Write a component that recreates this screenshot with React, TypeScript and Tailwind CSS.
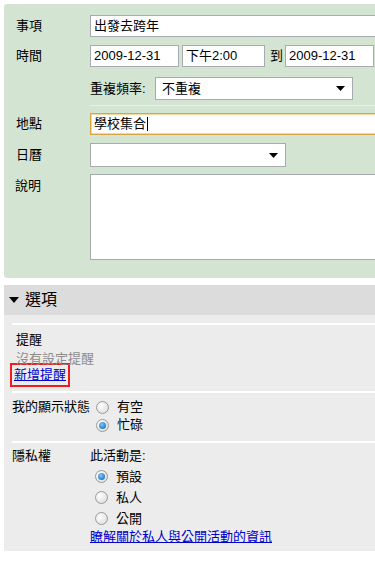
import type { ReactNode } from "react";

const font = { fontFamily: '"Liberation Sans", "Noto Sans CJK TC", sans-serif' };

function Label({ children }: { children: ReactNode }) {
  return <div className="w-[86px] shrink-0 pl-[12px] text-[13px] text-black">{children}</div>;
}

function TextBox({ value, className }: { value: string; className: string }) {
  return (
    <div
      className={`flex h-[22px] shrink-0 items-center border border-[#a7abb0] bg-white pl-[3px] text-[13px] text-black ${className}`}
    >
      {value}
    </div>
  );
}

function Arrow() {
  return (
    <svg width="9" height="5" viewBox="0 0 9 5" className="shrink-0">
      <path d="M0 0h9L4.5 5z" fill="#000" />
    </svg>
  );
}

function Radio({ checked }: { checked?: boolean }) {
  return (
    <span className="flex h-[13px] w-[13px] shrink-0 items-center justify-center rounded-full border border-[#9a9a9a] bg-[radial-gradient(circle_at_35%_35%,#ffffff,#d6d6d6)]">
      {checked ? (
        <span className="h-[7px] w-[7px] rounded-full bg-[radial-gradient(circle_at_40%_35%,#7fc4ff,#0a5fa8)]" />
      ) : null}
    </span>
  );
}

function RadioRow({ label, checked, h }: { label: string; checked?: boolean; h: string }) {
  return (
    <div className={`flex items-center gap-[8px] ${h}`}>
      <Radio checked={checked} />
      <span>{label}</span>
    </div>
  );
}

export default function App() {
  return (
    <div className="h-[572px] w-[375px] overflow-hidden bg-white pl-[4px] pt-[4px]" style={font}>
      {/* event details */}
      <div className="h-[274px] overflow-hidden rounded-l-[3px] bg-[#d3e5d2] pt-[11px]">
        <div className="flex items-center">
          <Label>事項</Label>
          <TextBox value="出發去跨年" className="w-[300px]" />
        </div>

        <div className="mt-[8px] flex items-center">
          <Label>時間</Label>
          <TextBox value="2009-12-31" className="w-[89px]" />
          <TextBox value="下午2:00" className="ml-[3px] w-[83px]" />
          <span className="ml-[5px] mr-[2px] text-[13px]">到</span>
          <TextBox value="2009-12-31" className="w-[89px]" />
        </div>

        <div className="ml-[86px] mt-[10px] flex items-center">
          <span className="w-[65px] shrink-0 text-[13px]">重複頻率:</span>
          <div className="flex h-[23px] w-[198px] items-center justify-between border border-[#a7abb0] bg-white pl-[6px] pr-[7px] text-[13px]">
            <span>不重複</span>
            <Arrow />
          </div>
        </div>

        <div className="ml-[86px] mt-[5px] h-px bg-[#e6f0e5]" />

        <div className="mt-[7px] flex items-center">
          <Label>地點</Label>
          <div className="flex h-[22px] w-[300px] shrink-0 items-center border border-[#d9a443] bg-white pl-[3px] text-[13px] shadow-[inset_0_0_0_1px_#f3d9a0]">
            學校集合
            <span className="ml-px h-[14px] w-px bg-black" />
          </div>
        </div>

        <div className="mt-[8px] flex items-center">
          <Label>日曆</Label>
          <div className="flex h-[24px] w-[196px] items-center justify-end border border-[#a7abb0] bg-white pr-[7px]">
            <Arrow />
          </div>
        </div>

        <div className="mt-[7px] flex items-start">
          <div className="w-[86px] shrink-0 pl-[11px] pt-[2px] text-[13px]">說明</div>
          <div className="h-[86px] w-[300px] shrink-0 border border-[#a7abb0] bg-white" />
        </div>
      </div>

      {/* options */}
      <div className="mt-[7px] h-[266px] bg-[#ececec] text-[13px]">
        <div className="flex h-[30px] items-center gap-[6px] bg-[#dcdcdc] pl-[5px]">
          <svg width="10" height="6" viewBox="0 0 10 6">
            <path d="M0 0h10L5 6z" fill="#000" />
          </svg>
          <span className="text-[16px]">選項</span>
        </div>

        <div className="ml-[8px] mt-[8px] h-[2px] bg-white" />

        <div className="pl-[12px] pt-[5px]">
          <div className="h-[19px] leading-[19px]">提醒</div>
          <div className="h-[19px] leading-[19px] text-[#8c8c8c]">沒有設定提醒</div>
          <div className="-ml-[6px] -mt-[5px] w-fit border-2 border-[#ee1c1c] px-[2px] leading-[20px]">
            <a className="text-[#0000cc] underline">新增提醒</a>
          </div>
        </div>

        <div className="ml-[8px] mt-[4px] h-[2px] bg-white" />

        <div className="flex pl-[8px] pt-[5px]">
          <div className="h-[18px] w-[84px] shrink-0 leading-[18px]">我的顯示狀態</div>
          <div>
            <RadioRow label="有空" h="h-[18px]" />
            <RadioRow label="忙碌" checked h="h-[18px]" />
          </div>
        </div>

        <div className="ml-[8px] mt-[7px] h-[2px] bg-white" />

        <div className="flex pl-[8px] pt-[3px]">
          <div className="h-[20px] w-[78px] shrink-0 leading-[20px]">隱私權</div>
          <div>
            <div className="h-[20px] leading-[20px]">此活動是:</div>
            <div className="pl-[5px]">
              <RadioRow label="預設" checked h="h-[21px]" />
              <RadioRow label="私人" h="h-[21px]" />
              <RadioRow label="公開" h="h-[21px]" />
            </div>
            <a className="block leading-[16px] text-[#0000cc] underline">瞭解關於私人與公開活動的資訊</a>
          </div>
        </div>
      </div>
    </div>
  );
}
